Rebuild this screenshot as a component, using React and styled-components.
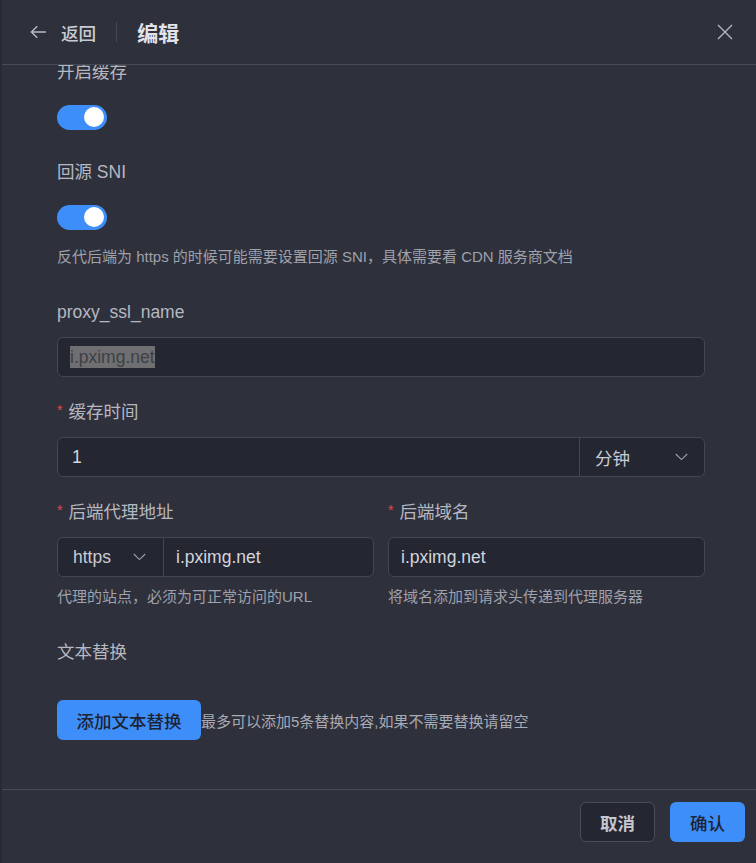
import React, { useLayoutEffect, useRef } from "react";
import styled, { createGlobalStyle } from "styled-components";

const GlobalStyle = createGlobalStyle`
  html, body { margin: 0; padding: 0; background: #2e303c; }
  * { box-sizing: border-box; }
`;

const Drawer = styled.div`
  display: flex;
  flex-direction: column;
  height: 100vh;
  background: #2e303c;
  border-left: 2px solid #282a35;
  font-family: "Liberation Sans", "Noto Sans CJK SC", sans-serif;
  color: #b6b8c1;
`;

const Header = styled.header`
  flex: none;
  height: 65px;
  display: flex;
  align-items: center;
  padding: 0 22px 0 28px;
  border-bottom: 1px solid #474955;
`;

const BackButton = styled.button`
  display: flex;
  align-items: center;
  gap: 14px;
  background: none;
  border: 0;
  padding: 0;
  cursor: pointer;
  font-family: inherit;
  font-size: 17.6px;
  font-weight: 500;
  color: #c9cbd2;
`;

const Divider = styled.span`
  width: 1px;
  height: 20px;
  background: #474955;
  margin: 0 20px;
`;

const Title = styled.h1`
  margin: 0;
  font-size: 21px;
  font-weight: 600;
  color: #e2e3e8;
  flex: 1;
`;

const CloseButton = styled.button`
  background: none;
  border: 0;
  padding: 0;
  width: 18px;
  height: 18px;
  display: flex;
  align-items: center;
  justify-content: center;
  color: #b3b5bf;
  cursor: pointer;
`;

const Body = styled.div`
  flex: 1;
  overflow-y: auto;
  scrollbar-width: none;
  padding: 24px 51px 48px 55px;
  &::-webkit-scrollbar { display: none; }
`;

const FormItem = styled.div`
  min-width: 0;
  margin-bottom: ${(p) => (p.$help ? 31 : 23)}px;
`;

const Label = styled.div`
  display: flex;
  align-items: center;
  font-size: 17.5px;
  line-height: 24px;
  color: #b6b8c1;
  margin-bottom: 13px;
`;

const Star = styled.span`
  color: #e5484d;
  font-size: 14px;
  line-height: 14px;
  align-self: flex-start;
  margin-top: 3px;
  margin-right: 6px;
`;

const Help = styled.div`
  margin-top: 8px;
  font-size: 15px;
  line-height: 24px;
  color: #9fa1ab;
`;

const ToggleRow = styled.div`
  height: 40px;
  display: flex;
  align-items: center;
`;

const Toggle = styled.button`
  position: relative;
  width: 50px;
  height: 25px;
  border: 0;
  padding: 0;
  border-radius: 13px;
  background: ${(p) => (p.$on ? "#3d8ef8" : "#4a4c58")};
  cursor: pointer;
  &::after {
    content: "";
    position: absolute;
    top: 2.5px;
    ${(p) => (p.$on ? "right: 3px;" : "left: 3px;")}
    width: 20px;
    height: 20px;
    border-radius: 50%;
    background: #ffffff;
  }
`;

const Field = styled.div`
  height: 40px;
  border: 1px solid #444652;
  border-radius: 6px;
  background: #242632;
  display: flex;
  align-items: stretch;
  overflow: hidden;
`;

const TextInput = styled.input`
  flex: 1;
  width: 0;
  min-width: 0;
  border: 0;
  outline: none;
  background: transparent;
  padding: 0 ${(p) => p.$pl || 14}px;
  font-family: inherit;
  font-size: 17.5px;
  color: #d3d5dc;
`;

const StaticValue = styled.div`
  flex: 1;
  display: flex;
  align-items: center;
  padding: 0 12px;
  font-size: 17.5px;
`;

const Selected = styled.span`
  background: #6f6f71;
  color: #3d3f46;
  line-height: 22px;
`;

const Select = styled.div`
  flex: none;
  width: ${(p) => p.$width}px;
  display: flex;
  align-items: center;
  justify-content: space-between;
  padding: 0 ${(p) => p.$pr}px 0 15px;
  font-size: 17.5px;
  color: #c9cbd2;
  border-left: ${(p) => (p.$divLeft ? "1px solid #444652" : "0")};
  border-right: ${(p) => (p.$divRight ? "1px solid #444652" : "0")};
`;

const Columns = styled.div`
  display: grid;
  grid-template-columns: minmax(0, 1fr) minmax(0, 1fr);
  column-gap: 14px;
`;

const ButtonRow = styled.div`
  display: flex;
  align-items: center;
  padding-top: 23px;
`;

const PrimaryButton = styled.button`
  height: 40px;
  padding: 0;
  min-width: ${(p) => p.$w || 0}px;
  border: 0;
  border-radius: 6px;
  background: #3d8ef8;
  color: #1d2331;
  font-family: inherit;
  font-size: 17.5px;
  font-weight: 500;
  cursor: pointer;
`;

const GhostButton = styled.button`
  height: 40px;
  min-width: ${(p) => p.$w}px;
  border: 1px solid #4a4c58;
  border-radius: 6px;
  background: #242632;
  color: #c5c7cf;
  font-family: inherit;
  font-size: 17.5px;
  font-weight: 600;
  cursor: pointer;
`;

const Note = styled.span`
  font-size: 15px;
  color: #a9abb4;
`;

const Footer = styled.footer`
  flex: none;
  display: flex;
  justify-content: flex-end;
  gap: 15px;
  padding: 12px 11px 21px;
  border-top: 1px solid #474955;
`;

const Chevron = () => (
  <svg width="13" height="8" viewBox="0 0 13 8" fill="none">
    <path d="M0.8 1 L6.5 6.6 L12.2 1" stroke="#9fa1ab" strokeWidth="1.1" />
  </svg>
);

export default function App() {
  const bodyRef = useRef(null);
  useLayoutEffect(() => {
    if (bodyRef.current) bodyRef.current.scrollTop = 29;
  }, []);

  return (
    <>
      <GlobalStyle />
      <Drawer>
        <Header>
          <BackButton>
            <svg width="17" height="14" viewBox="0 0 17 14" fill="none">
              <path d="M16 7 H1.5 M7.2 1.2 L1.4 7 L7.2 12.8" stroke="#b9bbc4" strokeWidth="1.4" />
            </svg>
            返回
          </BackButton>
          <Divider />
          <Title>编辑</Title>
          <CloseButton aria-label="close">
            <svg width="16" height="16" viewBox="0 0 16 16" fill="none">
              <path d="M1 1 L15 15 M15 1 L1 15" stroke="#b3b5bf" strokeWidth="1.4" />
            </svg>
          </CloseButton>
        </Header>

        <Body ref={bodyRef}>
          <FormItem>
            <Label>开启缓存</Label>
            <ToggleRow>
              <Toggle $on />
            </ToggleRow>
          </FormItem>

          <FormItem $help>
            <Label>回源 SNI</Label>
            <ToggleRow>
              <Toggle $on />
            </ToggleRow>
            <Help>反代后端为 https 的时候可能需要设置回源 SNI，具体需要看 CDN 服务商文档</Help>
          </FormItem>

          <FormItem>
            <Label>proxy_ssl_name</Label>
            <Field>
              <StaticValue>
                <Selected>i.pximg.net</Selected>
              </StaticValue>
            </Field>
          </FormItem>

          <FormItem>
            <Label>
              <Star>*</Star>缓存时间
            </Label>
            <Field>
              <TextInput defaultValue="1" readOnly />
              <Select $width={125} $pr={16} $divLeft>
                分钟
                <Chevron />
              </Select>
            </Field>
          </FormItem>

          <Columns>
            <FormItem $help>
              <Label>
                <Star>*</Star>后端代理地址
              </Label>
              <Field>
                <Select $width={106} $pr={17} $divRight>
                  https
                  <Chevron />
                </Select>
                <TextInput defaultValue="i.pximg.net" readOnly $pl={12} />
              </Field>
              <Help>代理的站点，必须为可正常访问的URL</Help>
            </FormItem>
            <FormItem $help>
              <Label>
                <Star>*</Star>后端域名
              </Label>
              <Field>
                <TextInput defaultValue="i.pximg.net" readOnly $pl={12} />
              </Field>
              <Help>将域名添加到请求头传递到代理服务器</Help>
            </FormItem>
          </Columns>

          <FormItem>
            <Label>文本替换</Label>
            <ButtonRow>
              <PrimaryButton $w={144}>添加文本替换</PrimaryButton>
              <Note>最多可以添加5条替换内容,如果不需要替换请留空</Note>
            </ButtonRow>
          </FormItem>
        </Body>

        <Footer>
          <GhostButton $w={75}>取消</GhostButton>
          <PrimaryButton $w={75}>确认</PrimaryButton>
        </Footer>
      </Drawer>
    </>
  );
}
